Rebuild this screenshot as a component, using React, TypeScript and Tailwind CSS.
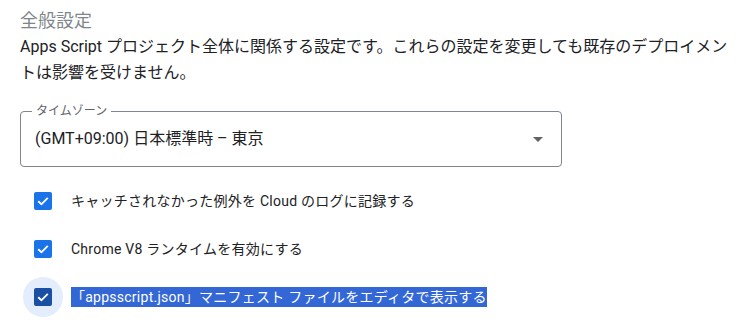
import React from 'react'

const font = { fontFamily: 'Roboto, "Noto Sans CJK JP", sans-serif' }

function Check({ dark }: { dark?: boolean }) {
  return (
    <span className={`flex h-[18px] w-[18px] items-center justify-center rounded-[2px] ${dark ? 'bg-[#1a4fa3]' : 'bg-[#1a73e8]'}`}>
      <svg width="14" height="14" viewBox="0 0 14 14" fill="none">
        <path d="M2.2 7.3 L5.4 10.3 L11.8 3.9" stroke="white" strokeWidth="1.9" />
      </svg>
    </span>
  )
}

const rows = [
  { label: 'キャッチされなかった例外を Cloud のログに記録する' },
  { label: 'Chrome V8 ランタイムを有効にする' },
  { label: '「appsscript.json」マニフェスト ファイルをエディタで表示する', focused: true },
]

export default function App() {
  return (
    <div className="h-[327px] w-[740px] bg-white pl-5 pr-1 pt-[9px] text-[#202124]" style={font}>
      <h2 className="text-[18px] leading-[24px] text-[#80868b]">全般設定</h2>
      <p className="mt-[1px] text-[16px] leading-[26px]">
        Apps Script プロジェクト全体に関係する設定です。これらの設定を変更しても既存のデプロイメントは影響を受けません。
      </p>

      {/* Timezone select */}
      <div className="relative mt-[25px] flex h-[56px] w-[542px] items-center justify-between rounded border border-[#80868b] pl-[14px] pr-[18px]">
        <span className="absolute -top-[8px] left-[11px] bg-white px-1 text-[12px] leading-[14px] text-[#5f6368]">タイムゾーン</span>
        <span className="text-[16px]">(GMT+09:00) 日本標準時 – 東京</span>
        <svg width="10" height="5" viewBox="0 0 10 5">
          <path d="M0 0 L10 0 L5 5 Z" fill="#5f6368" />
        </svg>
      </div>

      <div className="mt-[10px] flex flex-col">
        {rows.map(r => (
          <div key={r.label} className="flex h-12 items-center">
            <span className={`ml-[3px] flex h-10 w-10 items-center justify-center rounded-full ${r.focused ? 'bg-[#e3edfb]' : ''}`}>
              <Check dark={r.focused} />
            </span>
            <span className={`ml-2 text-[14px] leading-[20px] tracking-[0.25px] ${r.focused ? 'bg-[#3367d6] text-white' : ''}`}>{r.label}</span>
          </div>
        ))}
      </div>
    </div>
  )
}
